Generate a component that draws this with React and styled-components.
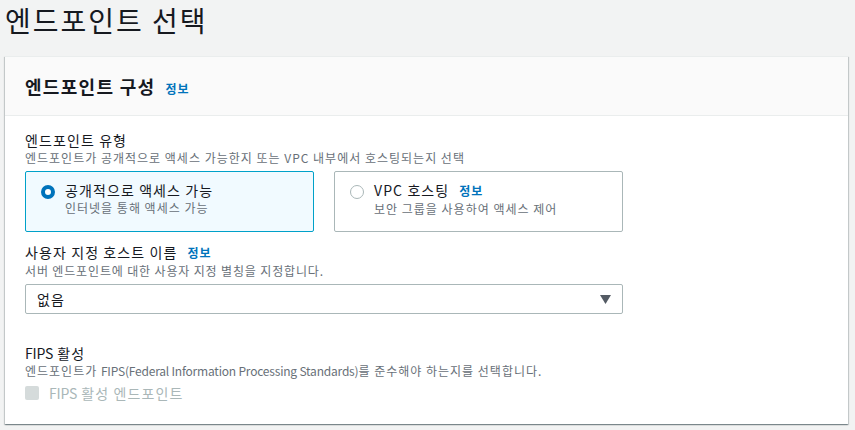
import React from "react";
import styled, { createGlobalStyle } from "styled-components";

const Global = createGlobalStyle`
  html, body { margin: 0; padding: 0; background: #f2f3f3; }
  body { font-family: "Noto Sans CJK KR", "Noto Sans", sans-serif; color: #16191f; }
  * { box-sizing: border-box; }
`;

const Page = styled.div`
  padding: 0 7px 0 5px;
  width: 855px;
  height: 430px;
  overflow: hidden;
`;

const PageTitle = styled.h1`
  margin: 0 0 16px;
  font-size: 28px;
  line-height: 40px;
  font-weight: 400;
  letter-spacing: 2px;
  color: #16191f;
`;

const Panel = styled.section`
  background: #fff;
  box-shadow: 0 1px 1px 0 rgba(0, 28, 36, 0.3), 1px 1px 1px 0 rgba(0, 28, 36, 0.15),
    -1px 1px 1px 0 rgba(0, 28, 36, 0.15);
  border-top: 1px solid #eaeded;
`;

const PanelHeader = styled.header`
  display: flex;
  align-items: baseline;
  gap: 10px;
  padding: 18px 20px;
  background: #fafafa;
  border-bottom: 1px solid #eaeded;
`;

const PanelTitle = styled.h2`
  margin: 0;
  font-size: 18px;
  line-height: 22px;
  font-weight: 700;
  letter-spacing: 1.3px;
`;

const InfoLink = styled.a`
  font-size: 12px;
  font-weight: 700;
  letter-spacing: 1px;
  color: #0073bb;
  text-decoration: none;
  margin-left: ${(p) => p.$ml || 0}px;
`;

const PanelBody = styled.div`
  padding: 14px 20px 21px;
  display: flex;
  flex-direction: column;
  max-width: 638px;
`;

const Field = styled.div`
  display: flex;
  flex-direction: column;
  margin-top: ${(p) => p.$mt || 0}px;
`;

const Label = styled.div`
  font-size: 14px;
  line-height: 20px;
  letter-spacing: 1.1px;
  color: #16191f;
  display: flex;
  align-items: baseline;
  white-space: pre;
`;

const Desc = styled.div`
  font-size: 12px;
  line-height: 16px;
  letter-spacing: ${(p) => p.$ls ?? 1}px;
  color: #687078;
  white-space: nowrap;
`;

const Latin = styled.span`
  letter-spacing: -0.2px;
`;

const Control = styled.div`
  margin-top: ${(p) => p.$mt || 5}px;
`;

const TileGrid = styled.div`
  display: grid;
  grid-template-columns: 1fr 1fr;
  gap: 20px;
`;

const Tile = styled.label`
  display: flex;
  gap: 10px;
  padding: 8px 15px 14px;
  border: 1px solid ${(p) => (p.$selected ? "#00a1c9" : "#aab7b8")};
  background: ${(p) => (p.$selected ? "#f1faff" : "#fff")};
  border-radius: 2px;
  cursor: pointer;
`;

const Radio = styled.span`
  flex: none;
  width: 14px;
  height: 14px;
  margin-top: 5px;
  border-radius: 50%;
  background: #fff;
  border: ${(p) => (p.$checked ? "4px solid #0073bb" : "1.5px solid #aab7b8")};
`;

const TileText = styled.div`
  display: flex;
  flex-direction: column;
`;

const Select = styled.div`
  height: 30px;
  border: 1px solid #aab7b8;
  border-radius: 2px;
  background: #fff;
  display: flex;
  align-items: center;
  justify-content: space-between;
  padding: 0 11px;
  font-size: 14px;
  letter-spacing: 1.1px;
`;

const Arrow = styled.svg`
  width: 11px;
  height: 9px;
  fill: #545b64;
`;

const CheckRow = styled.div`
  display: flex;
  align-items: center;
  gap: 10px;
  height: 20px;
`;

const Checkbox = styled.span`
  width: 14px;
  height: 14px;
  border-radius: 2px;
  background: #d5dbdb;
`;

const CheckLabel = styled.span`
  font-size: 14px;
  letter-spacing: 1.1px;
  color: #aab7b8;
`;

export default function App() {
  return (
    <Page>
      <Global />
      <PageTitle>엔드포인트 선택</PageTitle>
      <Panel>
        <PanelHeader>
          <PanelTitle>엔드포인트 구성</PanelTitle>
          <InfoLink href="#">정보</InfoLink>
        </PanelHeader>
        <PanelBody>
          <Field>
            <Label>엔드포인트 유형</Label>
            <Desc>엔드포인트가 공개적으로 액세스 가능한지 또는 VPC 내부에서 호스팅되는지 선택</Desc>
            <Control>
              <TileGrid>
                <Tile $selected>
                  <Radio $checked />
                  <TileText>
                    <Label>공개적으로 액세스 가능</Label>
                    <Desc>인터넷을 통해 액세스 가능</Desc>
                  </TileText>
                </Tile>
                <Tile>
                  <Radio />
                  <TileText>
                    <Label>
                      VPC 호스팅<InfoLink href="#" $ml={10}>정보</InfoLink>
                    </Label>
                    <Desc>보안 그룹을 사용하여 액세스 제어</Desc>
                  </TileText>
                </Tile>
              </TileGrid>
            </Control>
          </Field>
          <Field $mt={10}>
            <Label>
              사용자 지정 호스트 이름<InfoLink href="#" $ml={10}>정보</InfoLink>
            </Label>
            <Desc $ls={0.85}>서버 엔드포인트에 대한 사용자 지정 별칭을 지정합니다.</Desc>
            <Control>
              <Select>
                <span>없음</span>
                <Arrow viewBox="0 0 11 9">
                  <path d="M0 0 H11 L5.5 9 Z" />
                </Arrow>
              </Select>
            </Control>
          </Field>
          <Field $mt={29}>
            <Label>
              <Latin>FIPS</Latin> 활성
            </Label>
            <Desc>
              엔드포인트가 <Latin>FIPS(Federal Information Processing Standards)</Latin>를 준수해야 하는지를 선택합니다.
            </Desc>
            <Control $mt={4}>
              <CheckRow>
                <Checkbox />
                <CheckLabel>
                  <Latin>FIPS</Latin> 활성 엔드포인트
                </CheckLabel>
              </CheckRow>
            </Control>
          </Field>
        </PanelBody>
      </Panel>
    </Page>
  );
}
